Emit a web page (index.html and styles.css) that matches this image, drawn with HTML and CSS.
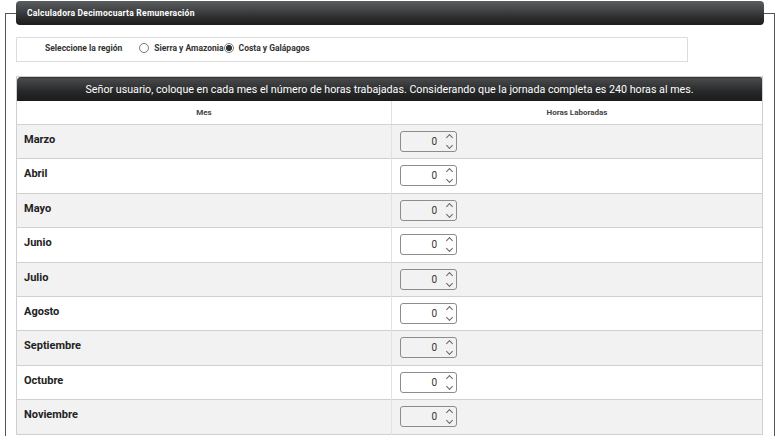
FILE: index.html
```html
<!DOCTYPE html>
<html lang="es">
<head>
    <meta charset="UTF-8">
    <title>Calculadora Decimocuarta Remuneración</title>
    <link rel="stylesheet" href="styles.css">
</head>
<body>
    <div class="frame">
        <!-- Barra de titulo -->
        <div class="title-bar">Calculadora Decimocuarta Remuneración</div>

        <!-- Region -->
        <div class="region-box">
            <span class="region-label">Seleccione la región</span>
            <label class="radio"><input type="radio" name="region"> Sierra y Amazonia</label>
            <label class="radio"><input type="radio" name="region" checked> Costa y Galápagos</label>
        </div>

        <!-- Tabla de meses -->
        <table class="hours-table">
            <colgroup>
                <col class="col-a">
                <col>
            </colgroup>
            <thead>
                <tr class="info-row">
                    <th colspan="2">Señor usuario, coloque en cada mes el número de horas trabajadas. Considerando que la jornada completa es 240 horas al mes.</th>
                </tr>
                <tr class="col-row">
                    <th class="col-month">Mes</th>
                    <th>Horas Laboradas</th>
                </tr>
            </thead>
            <tbody>
                <tr><td class="month">Marzo</td><td><div class="num-box"><span>0</span><span class="spin"></span></div></td></tr>
                <tr><td class="month">Abril</td><td><div class="num-box"><span>0</span><span class="spin"></span></div></td></tr>
                <tr><td class="month">Mayo</td><td><div class="num-box"><span>0</span><span class="spin"></span></div></td></tr>
                <tr><td class="month">Junio</td><td><div class="num-box"><span>0</span><span class="spin"></span></div></td></tr>
                <tr><td class="month">Julio</td><td><div class="num-box"><span>0</span><span class="spin"></span></div></td></tr>
                <tr><td class="month">Agosto</td><td><div class="num-box"><span>0</span><span class="spin"></span></div></td></tr>
                <tr><td class="month">Septiembre</td><td><div class="num-box"><span>0</span><span class="spin"></span></div></td></tr>
                <tr><td class="month">Octubre</td><td><div class="num-box"><span>0</span><span class="spin"></span></div></td></tr>
                <tr><td class="month">Noviembre</td><td><div class="num-box"><span>0</span><span class="spin"></span></div></td></tr>
            </tbody>
        </table>
    </div>
</body>
</html>
```

FILE: styles.css
```css
/* Corps de la page */
body {
    margin: 0;
    background: #ffffff;
    font-family: Roboto, 'Liberation Sans', sans-serif;
    color: #222;
}

/* Cadre exterieur */
.frame {
    margin: 13px 5px 0 5px;
    border: 1px solid #555;
    border-bottom: none;
    padding: 0 10px;
    height: 440px;
}

.title-bar {
    margin-top: -13px;
    height: 24px;
    line-height: 24px;
    padding-left: 11px;
    border-radius: 4px;
    background: linear-gradient(#5b5e61, #2c2d2e 70%, #1c1c1c);
    color: #fff;
    font-size: 8.5px;
    font-weight: bold;
    letter-spacing: 0.25px;
}

/* Choix de la region */
.region-box {
    margin-top: 12px;
    width: 672px;
    height: 25px;
    border: 1px solid #dcdcdc;
    display: flex;
    align-items: center;
    padding-left: 28px;
    box-sizing: border-box;
    padding-bottom: 3px;
    font-size: 8.5px;
    font-weight: bold;
    color: #333;
}

.region-label {
    margin-right: 17px;
}

.radio {
    display: flex;
    align-items: center;
    gap: 5px;
}

.radio input {
    appearance: none;
    margin: 0;
    width: 10px;
    height: 10px;
    border: 1px solid #777;
    border-radius: 50%;
    background: #fff;
}

.radio input:checked {
    background: radial-gradient(circle, #333 0 2.8px, #fff 3.3px);
}

/* Tableau */
.hours-table {
    margin-top: 14px;
    width: 747px;
    table-layout: fixed;
    border-collapse: collapse;
    border: 1px solid #cfcfcf;
}

.col-a {
    width: 375px;
}

.info-row th {
    height: 24px;
    padding: 0;
    background: linear-gradient(#4a4c4e, #262728 60%, #1b1b1b);
    color: #fff;
    font-size: 10.7px;
    font-weight: normal;
    border-radius: 4px 4px 0 0;
}

.col-row th {
    height: 23px;
    padding: 0;
    font-size: 8px;
    font-weight: bold;
    color: #444;
    background: #fff;
    border-bottom: 1px solid #d4d4d4;
}

.col-month,
.month {
    border-right: 1px solid #e2e2e2;
}

.hours-table tbody tr {
    height: 34.4px;
    border-bottom: 1px solid #d0d0d0;
}

.hours-table tbody tr:nth-child(odd) {
    background: #f2f2f2;
}

.hours-table td {
    padding: 0;
    vertical-align: top;
}

.month {
    padding: 8px 0 0 7px !important;
    font-size: 11px;
    font-weight: bold;
    line-height: 14px;
    color: #222;
}

/* Champ numerique */
.num-box {
    margin: 6px 0 0 8px;
    width: 57px;
    height: 21px;
    box-sizing: border-box;
    border: 1px solid #8c8c8c;
    border-radius: 3px;
    display: flex;
    align-items: center;
    justify-content: flex-end;
    font-size: 10px;
    color: #333;
}

.spin {
    position: relative;
    width: 10px;
    height: 19px;
    margin: 0 1px 0 8px;
}

.spin::before,
.spin::after {
    content: '';
    position: absolute;
    left: 2px;
    width: 4px;
    height: 4px;
    border-left: 1px solid #666;
    border-top: 1px solid #666;
}

.spin::before {
    top: 3px;
    transform: rotate(45deg);
}

.spin::after {
    bottom: 3px;
    transform: rotate(225deg);
}
```
